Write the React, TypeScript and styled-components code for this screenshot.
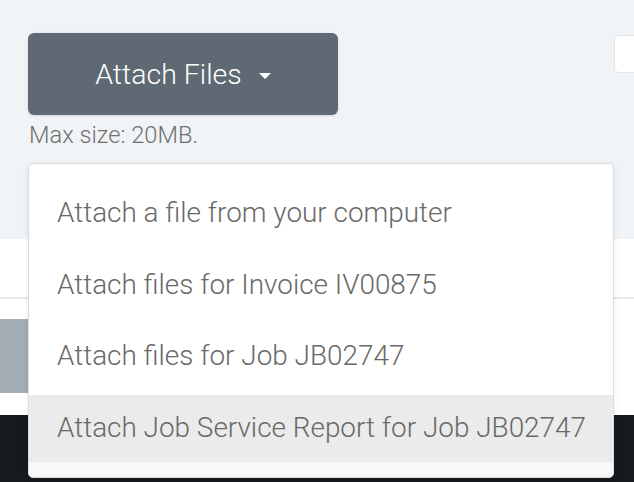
import React from 'react';
import styled, {createGlobalStyle} from 'styled-components';

const GlobalStyle = createGlobalStyle`
	html, body {
		margin: 0;
		padding: 0;
		overflow: hidden;
	}

	body {
		font-family: Roboto, "Liberation Sans", sans-serif;
	}
`;

const Page = styled.div`
	width: 634px;
	height: 482px;
	overflow: hidden;
	display: flex;
	flex-direction: column;
	background: #fff;
`;

const TopPanel = styled.div`
	height: 239px;
	flex: 0 0 auto;
	box-sizing: border-box;
	padding: 33px 0 0 28px;
	background: #f1f4f7;
	display: grid;
	grid-template-columns: 586px 1fr;
	align-items: start;
`;

const AttachGroup = styled.div`
	position: relative;
	display: flex;
	flex-direction: column;
	align-items: flex-start;
`;

const AttachButton = styled.button`
	width: 310px;
	height: 82px;
	border: none;
	border-radius: 6px;
	background: #5e6973;
	box-shadow: 0 1px 3px rgba(0, 0, 0, 0.12);
	color: #fff;
	font-family: Roboto, "Liberation Sans", sans-serif;
	font-size: 28.5px;
	font-weight: 300;
	display: flex;
	align-items: center;
	justify-content: center;
	padding: 0;
	cursor: pointer;
`;

const Caret = styled.span`
	width: 0;
	height: 0;
	margin: 4px 0 0 17px;
	border-left: 6.5px solid transparent;
	border-right: 6.5px solid transparent;
	border-top: 6.5px solid #fff;
`;

const Hint = styled.div`
	margin-top: 7px;
	padding-left: 1px;
	font-size: 23.7px;
	font-weight: 300;
	line-height: 26px;
	color: #707070;
`;

const Menu = styled.ul`
	position: absolute;
	top: 130px;
	left: 0;
	z-index: 10;
	width: 586px;
	box-sizing: border-box;
	margin: 0;
	padding: 16.5px 0 0;
	list-style: none;
	background: #fff;
	border: 1px solid #dcdcdc;
	border-radius: 5px;
	box-shadow: 0 2px 6px rgba(0, 0, 0, 0.08);
	overflow: hidden;
	display: flex;
	flex-direction: column;
	gap: 4.5px;
`;

const MenuItem = styled.li<{active?: boolean}>`
	height: 67px;
	box-sizing: border-box;
	padding: 0 28px 3px;
	display: flex;
	align-items: center;
	font-size: 27.9px;
	font-weight: 300;
	color: #696969;
	white-space: nowrap;
	background: ${props => props.active ? '#ebebeb' : '#fff'};
	cursor: pointer;
`;

const MenuFooter = styled.li`
	height: 15px;
	margin-top: -4.5px;
	background: #f8f8f8;
`;

const SearchBox = styled.div`
	width: 60px;
	height: 38px;
	margin-top: 2px;
	box-sizing: border-box;
	background: #fff;
	border: 1px solid #e1e5e9;
	border-radius: 5px;
`;

const Content = styled.div`
	flex: 0 0 auto;
	height: 176px;
	box-sizing: border-box;
	padding-top: 58px;
	background: #fff;
`;

const Divider = styled.div`
	height: 2px;
	background: #e6e9ec;
`;

const ActionRow = styled.div`
	display: flex;
	padding-top: 20px;
`;

const GreyAction = styled.div`
	width: 300px;
	height: 74px;
	background: #a3adb5;
`;

const Footer = styled.div`
	flex: 1 1 auto;
	background: #161a1e;
`;

const options = [
	'Attach a file from your computer',
	'Attach files for Invoice IV00875',
	'Attach files for Job JB02747',
	'Attach Job Service Report for Job JB02747',
];

export default function App() {
	return (
		<Page>
			<GlobalStyle/>
			<TopPanel>
				<AttachGroup>
					<AttachButton>
						Attach Files
						<Caret/>
					</AttachButton>
					<Hint>Max size: 20MB.</Hint>

					<Menu>
						{options.map((label, i) =>
							<MenuItem key={label} active={i === options.length - 1}>{label}</MenuItem>
						)}
						<MenuFooter/>
					</Menu>
				</AttachGroup>
				<SearchBox/>
			</TopPanel>

			<Content>
				<Divider/>
				<ActionRow>
					<GreyAction/>
				</ActionRow>
			</Content>

			<Footer/>
		</Page>
	);
}
